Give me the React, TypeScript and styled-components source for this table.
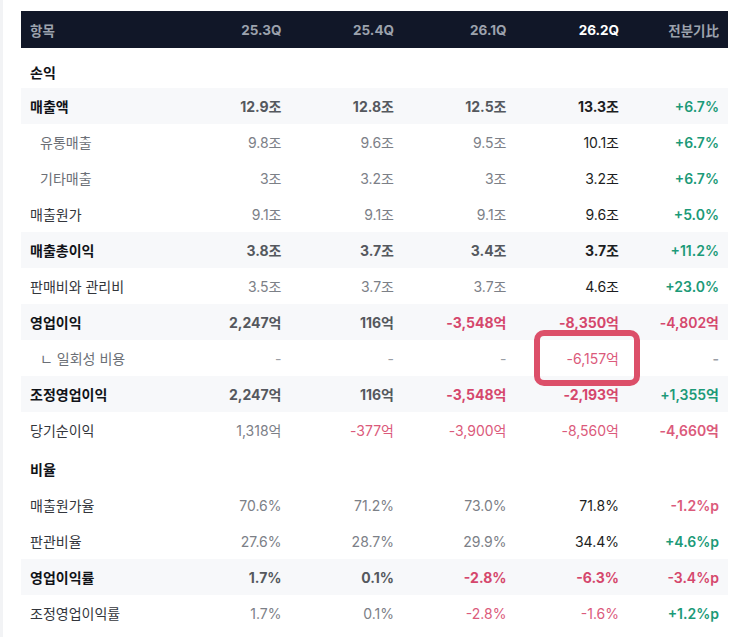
import React from "react";
import styled, { createGlobalStyle, css } from "styled-components";

const Global = createGlobalStyle`
  html, body { margin: 0; padding: 0; background: #ffffff; }
  body {
    font-family: Inter, "Noto Sans CJK KR", "Noto Sans", sans-serif;
    -webkit-font-smoothing: antialiased;
  }
`;

const Page = styled.div`
  border-left: 3px solid #f2f3f5;
  min-height: 637px;
  box-sizing: border-box;
  padding: 11px 12px 0 18px;
`;

const Table = styled.div`
  width: 707px;
  display: flex;
  flex-direction: column;
`;

const gridCols = css`
  display: grid;
  grid-template-columns: 157px repeat(4, 112.5px) 100px;
  align-items: center;
`;

const HeaderRow = styled.div`
  ${gridCols};
  height: 37px;
  background: #111728;
  font-size: 13.5px;
  font-weight: 700;
  color: #9ca2ad;
`;

const HCell = styled.div<{ $current?: boolean; $left?: boolean }>`
  padding: 0 9px;
  text-align: ${(p) => (p.$left ? "left" : "right")};
  color: ${(p) => (p.$current ? "#ffffff" : "#9ca2ad")};
`;

const SectionRow = styled.div<{ $h: number; $pt: number }>`
  height: ${(p) => p.$h}px;
  box-sizing: border-box;
  padding: ${(p) => p.$pt}px 9px 0;
  font-size: 14px;
  font-weight: 700;
  color: #111318;
`;

const Row = styled.div<{ $bold?: boolean }>`
  ${gridCols};
  height: 36px;
  background: ${(p) => (p.$bold ? "#f7f8fa" : "transparent")};
  font-size: 14px;
  font-weight: ${(p) => (p.$bold ? 700 : 400)};
`;

const Label = styled.div<{ $sub?: boolean; $bold?: boolean }>`
  padding-left: ${(p) => (p.$sub ? 19 : 9)}px;
  color: ${(p) => (p.$bold ? "#111318" : p.$sub ? "#6b6f76" : "#33363c")};
  white-space: nowrap;
`;

type Tone = "past" | "cur" | "red" | "green" | "muted";

const toneColor = (t: Tone, bold?: boolean) => {
  switch (t) {
    case "cur":
      return "#1c1e22";
    case "red":
      return bold ? "#d5476c" : "#db5a7b";
    case "green":
      return "#1c9a78";
    case "muted":
      return "#9a9ea5";
    default:
      return bold ? "#55585e" : "#7c8087";
  }
};

const Val = styled.div<{ $tone: Tone; $bold?: boolean; $change?: boolean }>`
  position: relative;
  padding: 0 9px;
  text-align: right;
  white-space: nowrap;
  color: ${(p) => toneColor(p.$tone, p.$bold)};
  font-weight: ${(p) => (p.$change ? 600 : p.$bold ? 700 : 400)};
`;

const Highlight = styled.span`
  position: absolute;
  left: 18px;
  right: -12px;
  height: 56px;
  top: 50%;
  transform: translateY(-50%);
  box-sizing: border-box;
  border: 6px solid #dc4f69;
  border-radius: 10px;
  pointer-events: none;
`;

type Cell = { v: string; t?: Tone };
type RowData = {
  label: string;
  bold?: boolean;
  sub?: boolean;
  cells: Cell[];
  highlight?: number;
};

const tone = (v: string, i: number): Tone => {
  if (v === "-") return "muted";
  if (i === 4) return v.startsWith("+") ? "green" : v.startsWith("-") ? "red" : "past";
  if (v.startsWith("-")) return "red";
  return i === 3 ? "cur" : "past";
};

const mk = (label: string, vals: string[], opts: Partial<RowData> = {}): RowData => ({
  label,
  ...opts,
  cells: vals.map((v, i) => ({ v, t: tone(v, i) })),
});

const profit: RowData[] = [
  mk("매출액", ["12.9조", "12.8조", "12.5조", "13.3조", "+6.7%"], { bold: true }),
  mk("유통매출", ["9.8조", "9.6조", "9.5조", "10.1조", "+6.7%"], { sub: true }),
  mk("기타매출", ["3조", "3.2조", "3조", "3.2조", "+6.7%"], { sub: true }),
  mk("매출원가", ["9.1조", "9.1조", "9.1조", "9.6조", "+5.0%"]),
  mk("매출총이익", ["3.8조", "3.7조", "3.4조", "3.7조", "+11.2%"], { bold: true }),
  mk("판매비와 관리비", ["3.5조", "3.7조", "3.7조", "4.6조", "+23.0%"]),
  mk("영업이익", ["2,247억", "116억", "-3,548억", "-8,350억", "-4,802억"], { bold: true }),
  mk("ㄴ 일회성 비용", ["-", "-", "-", "-6,157억", "-"], { sub: true, highlight: 3 }),
  mk("조정영업이익", ["2,247억", "116억", "-3,548억", "-2,193억", "+1,355억"], { bold: true }),
  mk("당기순이익", ["1,318억", "-377억", "-3,900억", "-8,560억", "-4,660억"]),
];

const ratio: RowData[] = [
  mk("매출원가율", ["70.6%", "71.2%", "73.0%", "71.8%", "-1.2%p"]),
  mk("판관비율", ["27.6%", "28.7%", "29.9%", "34.4%", "+4.6%p"]),
  mk("영업이익률", ["1.7%", "0.1%", "-2.8%", "-6.3%", "-3.4%p"], { bold: true }),
  mk("조정영업이익률", ["1.7%", "0.1%", "-2.8%", "-1.6%", "+1.2%p"]),
];

const DataRow = ({ r }: { r: RowData }) => (
  <Row $bold={r.bold}>
    <Label $sub={r.sub} $bold={r.bold}>
      {r.label}
    </Label>
    {r.cells.map((c, i) => (
      <Val key={i} $tone={c.t as Tone} $bold={r.bold} $change={i === 4}>
        {c.v}
        {r.highlight === i && <Highlight />}
      </Val>
    ))}
  </Row>
);

export default function App() {
  return (
    <>
      <Global />
      <Page>
        <Table>
          <HeaderRow>
            <HCell $left>항목</HCell>
            <HCell>25.3Q</HCell>
            <HCell>25.4Q</HCell>
            <HCell>26.1Q</HCell>
            <HCell $current>26.2Q</HCell>
            <HCell>전분기比</HCell>
          </HeaderRow>
          <SectionRow $h={40} $pt={14}>
            손익
          </SectionRow>
          {profit.map((r) => (
            <DataRow key={r.label} r={r} />
          ))}
          <SectionRow $h={39} $pt={11}>
            비율
          </SectionRow>
          {ratio.map((r) => (
            <DataRow key={r.label} r={r} />
          ))}
        </Table>
      </Page>
    </>
  );
}
